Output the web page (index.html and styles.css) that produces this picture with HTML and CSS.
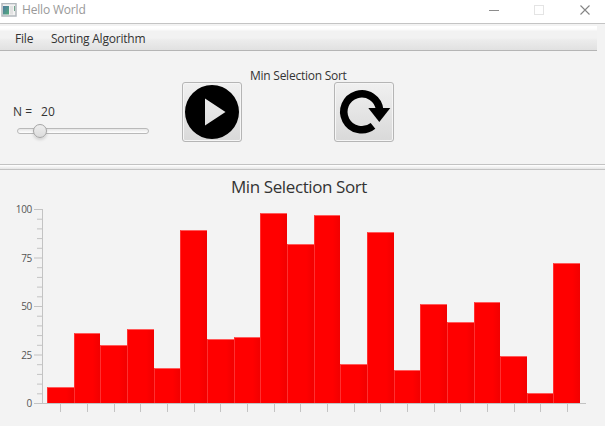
FILE: index.html
```html
<!DOCTYPE html>
<html lang="en">
<head>
<meta charset="utf-8">
<title>Hello World</title>
<link rel="stylesheet" href="styles.css">
</head>
<body>
<header class="titlebar">
  <svg class="app-icon" width="16" height="14" viewBox="0 0 16 14">
    <defs><linearGradient id="g" x1="0" y1="0" x2="1" y2="1"><stop offset="0" stop-color="#4c78a0"/><stop offset="1" stop-color="#55ac7c"/></linearGradient></defs>
    <rect x="1" y=".5" width="14" height="12.500" fill="#f2f2f2" stroke="#b2b8bd" stroke-width="1.500"/>
    <rect x="2" y="3" width="6" height="8.500" fill="url(#g)"/><rect x="9" y="3" width="3" height="8.500" fill="#e2e2e2"/><path d="M13 3h1v5h-1z" fill="#72a68c"/>
  </svg>
  <span class="window-name">Hello World</span>
  <svg class="window-buttons" width="116" height="20" viewBox="0 0 116 20" fill="none">
    <path d="M0 10.500h10" stroke="#8c8c8c"/>
    <rect x="45.500" y="5.500" width="9" height="9" stroke="#e4e4e4"/>
    <path d="M91.500 5.500l9 9M100.500 5.500l-9 9" stroke="#858585" stroke-width="1.100"/>
  </svg>
</header>
<nav class="menubar"><span class="menu-file">File</span><span class="menu-sort">Sorting Algorithm</span></nav>
<section class="controls">
  <div class="size">
    <div class="size-label"><span>N =</span><span>20</span></div>
    <div class="track"><div class="thumb"></div></div>
  </div>
  <div class="actions">
    <div class="algorithm">Min Selection Sort</div>
    <div class="buttons">
      <button aria-label="Play"><svg width="58" height="58" viewBox="0 0 58 58"><path fill-rule="evenodd" d="M29 2a27 27 0 1 0 0 54a27 27 0 1 0 0-54M22 15.500L42.500 29L22 42.500z"/></svg></button>
      <button aria-label="Restart"><svg width="58" height="58" viewBox="0 0 58 58"><path d="M38 42.900A18 18 0 1 1 44.700 27" fill="none" stroke="#000" stroke-width="7.500"/><path d="M33.300 25H55.300L44.300 39z"/></svg></button>
    </div>
  </div>
</section>
<div class="divider"></div>
<main class="chart">
  <h1>Min Selection Sort</h1>
  <div class="plot">
    <div class="labels"><span>100</span><span>75</span><span>50</span><span>25</span><span>0</span></div>
    <svg class="y-axis" width="9" height="195" viewBox="0 0 9 195" stroke="#c3c3c3" fill="none">
      <path d="M8.500 0V195M0 .5h8M0 97.500h8M0 194.500h8"/>
      <path stroke="#dadada" stroke-width="2" d="M0 49h8M0 146h8"/>
      <path d="M3 10.200h5M3 19.900h5M3 29.600h5M3 39.300h5M3 58.700h5M3 68.400h5M3 78.100h5M3 87.800h5M3 107.200h5M3 116.900h5M3 126.600h5M3 136.300h5M3 155.700h5M3 165.400h5M3 175.100h5M3 184.800h5"/>
    </svg>
    <div class="bars">
      <i style="--v:8"></i><i style="--v:36"></i><i style="--v:30"></i><i style="--v:38"></i><i style="--v:18"></i><i style="--v:89"></i><i style="--v:33"></i><i style="--v:34"></i><i style="--v:98"></i><i style="--v:82"></i><i style="--v:97"></i><i style="--v:20"></i><i style="--v:88"></i><i style="--v:17"></i><i style="--v:51"></i><i style="--v:42"></i><i style="--v:52"></i><i style="--v:24"></i><i style="--v:5"></i><i style="--v:72"></i>
    </div>
  </div>
  <div class="x-ticks"><i></i><i></i><i></i><i></i><i></i><i></i><i></i><i></i><i></i><i></i><i></i><i></i><i></i><i></i><i></i><i></i><i></i><i></i><i></i><i></i></div>
</main>
</body>
</html>
```
FILE: styles.css
```css
* { box-sizing: border-box; }
body {
  margin: 0;
  width: 605px;
  height: 426px;
  overflow: hidden;
  background: #f3f3f3;
  color: #333;
  font: 12px/16px "Open Sans", "Noto Sans", sans-serif;
}
.titlebar {
  display: flex;
  align-items: center;
  height: 24px;
  padding: 0 0 3px 1px;
  background: #fff;
  border-bottom: 1px solid #c4c4c4;
}
.window-name { margin-left: 5px; color: #999; letter-spacing: -.18px; }
.window-buttons { margin-left: auto; }
.menubar {
  display: flex;
  width: 597px;
  height: 25px;
  margin-top: 2px;
  padding: 5px 0 0 15px;
  border-bottom: 1px solid #b5b5b5;
  background: linear-gradient(#fff 0 2px, #fafafa 4px, #f2f2f2 5px, #f2f2f2 12px, #ececec 14px, #e1e1e1);
}
.menu-file { width: 36px; letter-spacing: -.2px; }
.menu-sort { letter-spacing: -.22px; }
.controls { display: flex; height: 113px; }
.size { width: 182px; padding: 53px 0 0 13px; }
.size-label { display: flex; gap: 9px; }
.track {
  width: 132px;
  height: 6px;
  margin: 8px 0 0 4px;
  border: 1px solid #b9b9b9;
  border-radius: 3px;
  background: linear-gradient(#e6e6e6, #fff);
}
.thumb {
  width: 14px;
  height: 14px;
  margin: -5px 0 0 15px;
  border: 1px solid #a5a5a5;
  border-radius: 50%;
  background: linear-gradient(#eee, #dcdcdc);
  box-shadow: 0 2px 3px #0002;
}
.actions { width: 212px; padding-top: 17px; }
.algorithm { height: 14px; padding-left: 68px; letter-spacing: -.25px; white-space: nowrap; }
.buttons { display: flex; justify-content: space-between; }
button {
  width: 60px;
  height: 60px;
  padding: 0;
  border: 1px solid #b5b5b5;
  border-radius: 3px;
  background: linear-gradient(#f0f0f0, #d9d9d9);
  box-shadow: inset 0 0 0 1px #f5f5f5;
}
button svg { display: block; }
.divider {
  height: 6px;
  border: solid #c2c2c2;
  border-width: 1px 0;
  background: linear-gradient(#fff, #e5e5e5);
}
h1 {
  height: 39px;
  margin: 0;
  padding: 5px 7px 0 0;
  font-size: 17px;
  font-weight: 400;
  line-height: 24px;
  letter-spacing: -.4px;
  text-align: center;
}
.plot { display: flex; height: 195px; }
.labels {
  display: flex;
  flex-direction: column;
  justify-content: space-between;
  width: 34px;
  height: 207px;
  margin-top: -6px;
  padding-right: 2px;
  color: #555;
  font-size: 10px;
  line-height: 13px;
  letter-spacing: -.3px;
  text-align: right;
}
.y-axis { display: block; }
.bars {
  display: flex;
  align-items: flex-end;
  width: 543px;
  padding: 0 6px 0 4px;
  border-bottom: 1px solid #c3c3c3;
}
.bars i {
  flex: 1;
  height: calc(var(--v) * 1.94px);
  border: solid #ff5a5a;
  border-width: 1px 0 0 1px;
  border-left-color: #ff3030;
  background: linear-gradient(90deg, #f00 70%, #f20000);
}
.x-ticks { display: flex; width: 533px; height: 8px; margin-left: 47px; }
.x-ticks i { flex: 1; }
.x-ticks i::before {
  content: "";
  display: block;
  width: 1px;
  height: 8px;
  margin-left: 13.4px;
  background: #c3c3c3;
}
```
